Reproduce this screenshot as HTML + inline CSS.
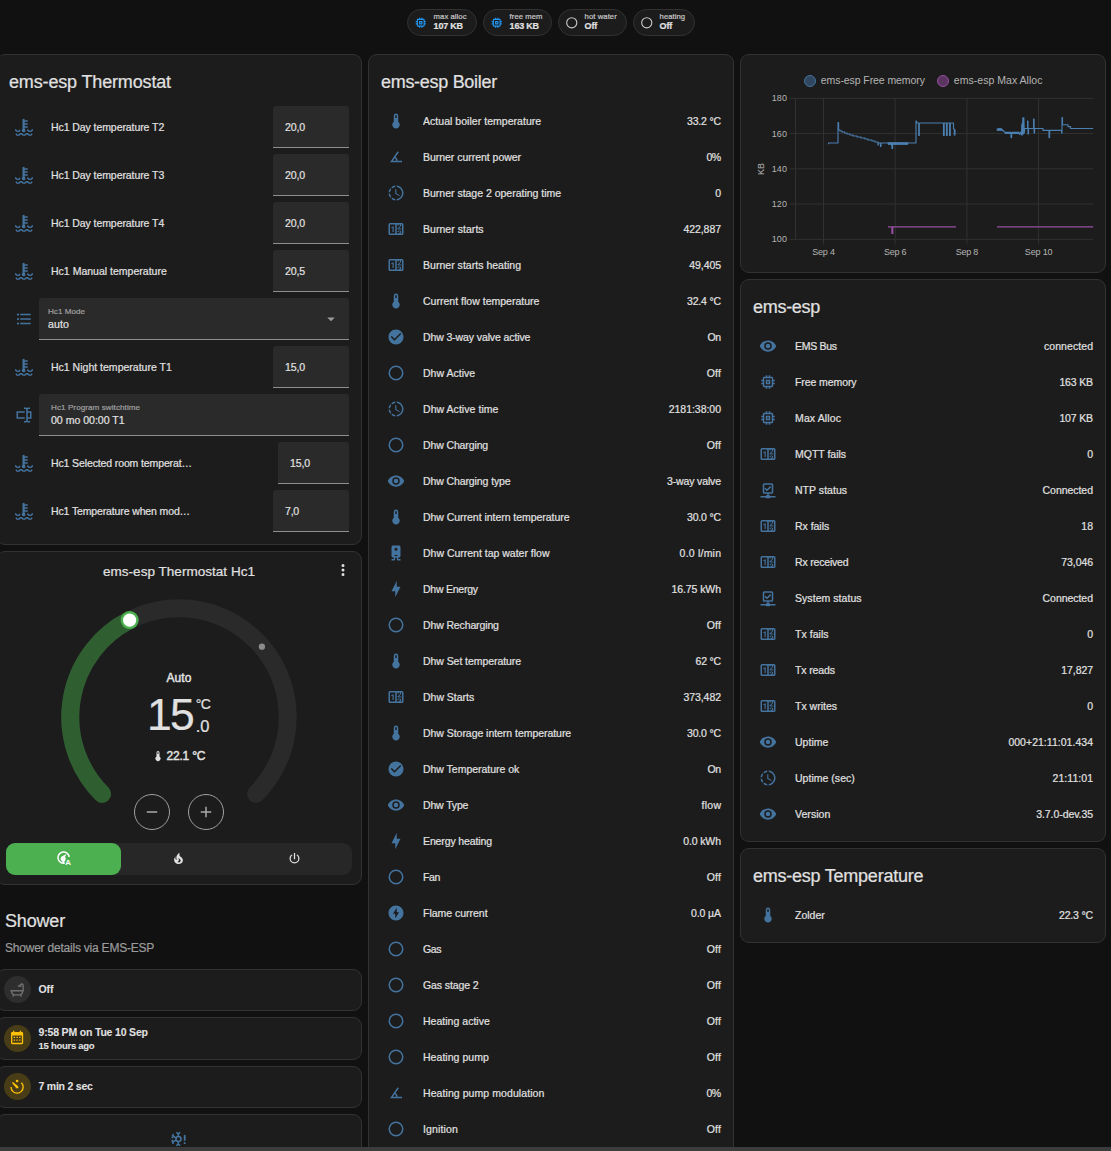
<!DOCTYPE html><html><head><meta charset="utf-8"><title>ems-esp</title><style>
*{box-sizing:border-box}
html,body{margin:0;padding:0;background:#111;overflow:hidden}
body{width:1111px;height:1151px;position:relative;font-family:"Liberation Sans", sans-serif;color:#e1e1e1;font-size:10.5px;line-height:1.2;-webkit-text-stroke:0.2px}
svg{display:block;fill:#44739e}
.t{white-space:nowrap}
.col{position:absolute;top:54px;width:366px}
.card{background:#1c1c1c;border:1px solid #323232;border-radius:9px;margin-bottom:6px;position:relative}
.hdr{font-size:18px;line-height:36px;height:57px;padding:9px 12px 12px;color:#e1e1e1;display:block}
.states{padding:0 12px 12px;margin-top:-6px}
.row{display:flex;align-items:center;height:30px;margin:6px 0}
.row.tall{height:42px}
.states>.row:first-child{margin-top:0}.states>.row:last-child{margin-bottom:0}
.badge{width:30px;height:30px;display:flex;align-items:center;justify-content:center;flex:none}
.info{margin-left:12px;flex:1 1 0;min-width:0;overflow:hidden;text-overflow:ellipsis;padding-right:6px}
.val{text-align:right;flex:none}
.tf{height:42px;background:#2a2a2a;border-radius:3px 3px 0 0;border-bottom:1px solid #8e8e8e;flex:none;padding:1px 12px 0;display:flex;align-items:center;font-size:10.6px;position:relative}
.tf.wide{flex:1;margin-left:0;display:block;padding:0}
.tf .lbl{position:absolute;left:9px;top:9px;font-size:8.1px;color:#a0a0a0}
.tf .v{position:absolute;left:9px;top:20px;font-size:10.6px}
.tf.p12 .lbl,.tf.p12 .v{left:12px}
/* chips */
.chip{position:absolute;top:9px;height:27px;border:1px solid #323232;border-radius:13.5px;background:#1c1c1c;}
.chip svg{position:absolute;left:6px;top:5.8px}
.chip .a{position:absolute;left:25.6px;top:1.8px;font-size:7.7px;color:#c8c8c8;line-height:9px}
.chip .b{position:absolute;left:25.6px;top:11.1px;font-size:9px;font-weight:700;line-height:10px}

.m5{-webkit-text-stroke:0.45px currentColor}
.thtitle{position:absolute;left:0;right:0;top:9.5px;text-align:center;font-size:13.5px;line-height:20px}
.thmode{position:absolute;left:0;right:0;top:118px;text-align:center;font-size:12px;line-height:16px}
.thbig{position:absolute;left:150px;top:137.8px;font-size:44.5px;line-height:50px}
.thunit{position:absolute;left:198.8px;top:144px;font-size:14px;line-height:16px}
.thdec{position:absolute;left:198.8px;top:164px;font-size:16.5px;line-height:20px}
.thcur{position:absolute;left:169.5px;top:195.5px;font-size:12px;line-height:16px}
.thbtn{position:absolute;width:36px;height:36px;border:1px solid #a0a0a0;border-radius:50%;display:flex;align-items:center;justify-content:center}
.thbtn svg{fill:#a8a8a8}
.thsel{position:absolute;width:346px;height:32px;border-radius:9px;background:#272727;display:flex}
.thsel div{flex:1;display:flex;align-items:center;justify-content:center;border-radius:9px;padding-bottom:2px}
.thsel div.on{background:#4caf50}
.thsel svg{fill:#e1e1e1}
.shtitle{position:absolute;left:9px;top:855.5px;font-size:18px;line-height:22px}
.shsub{position:absolute;left:9px;top:885.5px;font-size:12px;line-height:16px;color:#9b9b9b}
.mc{position:absolute;left:0;width:366px;height:42px;margin:0}
.shape{position:absolute;left:7px;top:6px;width:27px;height:27px;border-radius:50%;display:flex;align-items:center;justify-content:center}
.shape svg{position:absolute;left:4.7px;top:5.4px}
.mp,.ms{-webkit-text-stroke:0.08px}
.mp{position:absolute;left:41.5px;top:12px;font-size:10.5px;font-weight:700;line-height:14px}
.mp.two{top:6.8px}
.ms{position:absolute;left:41.5px;top:22.2px;font-size:9.5px;font-weight:700;line-height:12px}
.bul{position:absolute;width:12px;height:12px;border-radius:50%;border:1px solid}
.leg,.yl,.xl,.kb{-webkit-text-stroke:0}
.leg{position:absolute;top:18.3px;font-size:10.5px;line-height:14px;color:#b4b4b4}
.yl{position:absolute;right:318px;font-size:9px;line-height:12px;color:#b4b4b4;text-align:right}
.xl{position:absolute;width:60px;top:190.5px;font-size:9px;line-height:12px;color:#b4b4b4;text-align:center}
.kb{position:absolute;left:6.5px;top:107.5px;width:26px;text-align:center;font-size:9px;line-height:12px;color:#b4b4b4;transform:rotate(-90deg)}
</style></head><body>
<div class="chip" style="left:407px;width:70px"><svg style="fill:#2196f3" viewBox="0 0 24 24" width="13.5" height="13.5"><path d="M17,17H7V7H17M21,11V9H19V7C19,5.89 18.1,5 17,5H15V3H13V5H11V3H9V5H7C5.89,5 5,5.89 5,7V9H3V11H5V13H3V15H5V17A2,2 0 0,0 7,19H9V21H11V19H13V21H15V19H17A2,2 0 0,0 19,17V15H21V13H19V11M13,13H11V11H13M15,9H9V15H15V9Z"/></svg><div class="t a" style="letter-spacing:0.056px">max alloc</div><div class="t b" style="letter-spacing:-0.219px">107 KB</div></div>
<div class="chip" style="left:483px;width:69px"><svg style="fill:#2196f3" viewBox="0 0 24 24" width="13.5" height="13.5"><path d="M17,17H7V7H17M21,11V9H19V7C19,5.89 18.1,5 17,5H15V3H13V5H11V3H9V5H7C5.89,5 5,5.89 5,7V9H3V11H5V13H3V15H5V17A2,2 0 0,0 7,19H9V21H11V19H13V21H15V19H17A2,2 0 0,0 19,17V15H21V13H19V11M13,13H11V11H13M15,9H9V15H15V9Z"/></svg><div class="t a" style="letter-spacing:0.045px">free mem</div><div class="t b" style="letter-spacing:-0.219px">163 KB</div></div>
<div class="chip" style="left:558px;width:69px"><svg style="fill:#c8c8c8" viewBox="0 0 24 24" width="13.5" height="13.5"><path d="M12,20A8,8 0 0,1 4,12A8,8 0 0,1 12,4A8,8 0 0,1 20,12A8,8 0 0,1 12,20M12,2A10,10 0 0,0 2,12A10,10 0 0,0 12,22A10,10 0 0,0 22,12A10,10 0 0,0 12,2Z"/></svg><div class="t a" style="letter-spacing:0.064px">hot water</div><div class="t b" style="letter-spacing:-0.115px">Off</div></div>
<div class="chip" style="left:633px;width:62px"><svg style="fill:#c8c8c8" viewBox="0 0 24 24" width="13.5" height="13.5"><path d="M12,20A8,8 0 0,1 4,12A8,8 0 0,1 12,4A8,8 0 0,1 20,12A8,8 0 0,1 12,20M12,2A10,10 0 0,0 2,12A10,10 0 0,0 12,22A10,10 0 0,0 22,12A10,10 0 0,0 12,2Z"/></svg><div class="t a" style="letter-spacing:0.031px">heating</div><div class="t b" style="letter-spacing:-0.115px">Off</div></div>
<div class="col" style="left:-4px">
<div class="card"><div class="t hdr" style="letter-spacing:-0.153px">ems-esp Thermostat</div><div class="states">
<div class="row tall"><div class="badge"><svg viewBox="0 0 24 24" width="18" height="18"><path d="M11.5,1A1.5,1.5 0 0,0 10,2.5V14.5C9.37,14.97 9,15.71 9,16.5A2.5,2.5 0 0,0 11.5,19A2.5,2.5 0 0,0 14,16.5C14,15.71 13.63,15 13,14.5V13H17V11H13V9H17V7H13V5H17V3H13V2.5A1.5,1.5 0 0,0 11.5,1M0,15V17C0.67,17 0.79,17.21 1.29,17.71C1.79,18.21 2.67,19 4,19C5.33,19 6.21,18.21 6.71,17.71C6.82,17.59 6.91,17.5 7,17.41V15.16C6.21,15.42 5.65,15.93 5.29,16.29C4.79,16.79 4.67,17 4,17C3.33,17 3.21,16.79 2.71,16.29C2.21,15.79 1.33,15 0,15M16,15V17C16.67,17 16.79,17.21 17.29,17.71C17.79,18.21 18.67,19 20,19C21.33,19 22.21,18.21 22.71,17.71C23.21,17.21 23.33,17 24,17V15C22.67,15 21.79,15.79 21.29,16.29C20.79,16.79 20.67,17 20,17C19.33,17 19.21,16.79 18.71,16.29C18.21,15.79 17.33,15 16,15M8,20C6.67,20 5.79,20.79 5.29,21.29C4.79,21.79 4.67,22 4,22C3.33,22 3.21,21.79 2.71,21.29C2.35,20.93 1.79,20.42 1,20.16V22.41C1.09,22.5 1.18,22.59 1.29,22.71C1.79,23.21 2.67,24 4,24C5.33,24 6.21,23.21 6.71,22.71C7.21,22.21 7.33,22 8,22C8.67,22 8.79,22.21 9.29,22.71C9.79,23.21 10.67,24 12,24C13.33,24 14.21,23.21 14.71,22.71C15.21,22.21 15.33,22 16,22C16.67,22 16.79,22.21 17.29,22.71C17.79,23.21 18.67,24 20,24C21.33,24 22.21,23.21 22.71,22.71C22.82,22.59 22.91,22.5 23,22.41V20.16C22.21,20.42 21.65,20.93 21.29,21.29C20.79,21.79 20.67,22 20,22C19.33,22 19.21,21.79 18.71,21.29C18.21,20.79 17.33,20 16,20C14.67,20 13.79,20.79 13.29,21.29C12.79,21.79 12.67,22 12,22C11.33,22 11.21,21.79 10.71,21.29C10.21,20.79 9.33,20 8,20Z"/></svg></div><div class="t info" style="letter-spacing:-0.074px">Hc1 Day temperature T2</div><div class="tf" style="width:76px"><span class="t tfv" style="letter-spacing:-0.168px">20,0</span></div></div>
<div class="row tall"><div class="badge"><svg viewBox="0 0 24 24" width="18" height="18"><path d="M11.5,1A1.5,1.5 0 0,0 10,2.5V14.5C9.37,14.97 9,15.71 9,16.5A2.5,2.5 0 0,0 11.5,19A2.5,2.5 0 0,0 14,16.5C14,15.71 13.63,15 13,14.5V13H17V11H13V9H17V7H13V5H17V3H13V2.5A1.5,1.5 0 0,0 11.5,1M0,15V17C0.67,17 0.79,17.21 1.29,17.71C1.79,18.21 2.67,19 4,19C5.33,19 6.21,18.21 6.71,17.71C6.82,17.59 6.91,17.5 7,17.41V15.16C6.21,15.42 5.65,15.93 5.29,16.29C4.79,16.79 4.67,17 4,17C3.33,17 3.21,16.79 2.71,16.29C2.21,15.79 1.33,15 0,15M16,15V17C16.67,17 16.79,17.21 17.29,17.71C17.79,18.21 18.67,19 20,19C21.33,19 22.21,18.21 22.71,17.71C23.21,17.21 23.33,17 24,17V15C22.67,15 21.79,15.79 21.29,16.29C20.79,16.79 20.67,17 20,17C19.33,17 19.21,16.79 18.71,16.29C18.21,15.79 17.33,15 16,15M8,20C6.67,20 5.79,20.79 5.29,21.29C4.79,21.79 4.67,22 4,22C3.33,22 3.21,21.79 2.71,21.29C2.35,20.93 1.79,20.42 1,20.16V22.41C1.09,22.5 1.18,22.59 1.29,22.71C1.79,23.21 2.67,24 4,24C5.33,24 6.21,23.21 6.71,22.71C7.21,22.21 7.33,22 8,22C8.67,22 8.79,22.21 9.29,22.71C9.79,23.21 10.67,24 12,24C13.33,24 14.21,23.21 14.71,22.71C15.21,22.21 15.33,22 16,22C16.67,22 16.79,22.21 17.29,22.71C17.79,23.21 18.67,24 20,24C21.33,24 22.21,23.21 22.71,22.71C22.82,22.59 22.91,22.5 23,22.41V20.16C22.21,20.42 21.65,20.93 21.29,21.29C20.79,21.79 20.67,22 20,22C19.33,22 19.21,21.79 18.71,21.29C18.21,20.79 17.33,20 16,20C14.67,20 13.79,20.79 13.29,21.29C12.79,21.79 12.67,22 12,22C11.33,22 11.21,21.79 10.71,21.29C10.21,20.79 9.33,20 8,20Z"/></svg></div><div class="t info" style="letter-spacing:-0.074px">Hc1 Day temperature T3</div><div class="tf" style="width:76px"><span class="t tfv" style="letter-spacing:-0.168px">20,0</span></div></div>
<div class="row tall"><div class="badge"><svg viewBox="0 0 24 24" width="18" height="18"><path d="M11.5,1A1.5,1.5 0 0,0 10,2.5V14.5C9.37,14.97 9,15.71 9,16.5A2.5,2.5 0 0,0 11.5,19A2.5,2.5 0 0,0 14,16.5C14,15.71 13.63,15 13,14.5V13H17V11H13V9H17V7H13V5H17V3H13V2.5A1.5,1.5 0 0,0 11.5,1M0,15V17C0.67,17 0.79,17.21 1.29,17.71C1.79,18.21 2.67,19 4,19C5.33,19 6.21,18.21 6.71,17.71C6.82,17.59 6.91,17.5 7,17.41V15.16C6.21,15.42 5.65,15.93 5.29,16.29C4.79,16.79 4.67,17 4,17C3.33,17 3.21,16.79 2.71,16.29C2.21,15.79 1.33,15 0,15M16,15V17C16.67,17 16.79,17.21 17.29,17.71C17.79,18.21 18.67,19 20,19C21.33,19 22.21,18.21 22.71,17.71C23.21,17.21 23.33,17 24,17V15C22.67,15 21.79,15.79 21.29,16.29C20.79,16.79 20.67,17 20,17C19.33,17 19.21,16.79 18.71,16.29C18.21,15.79 17.33,15 16,15M8,20C6.67,20 5.79,20.79 5.29,21.29C4.79,21.79 4.67,22 4,22C3.33,22 3.21,21.79 2.71,21.29C2.35,20.93 1.79,20.42 1,20.16V22.41C1.09,22.5 1.18,22.59 1.29,22.71C1.79,23.21 2.67,24 4,24C5.33,24 6.21,23.21 6.71,22.71C7.21,22.21 7.33,22 8,22C8.67,22 8.79,22.21 9.29,22.71C9.79,23.21 10.67,24 12,24C13.33,24 14.21,23.21 14.71,22.71C15.21,22.21 15.33,22 16,22C16.67,22 16.79,22.21 17.29,22.71C17.79,23.21 18.67,24 20,24C21.33,24 22.21,23.21 22.71,22.71C22.82,22.59 22.91,22.5 23,22.41V20.16C22.21,20.42 21.65,20.93 21.29,21.29C20.79,21.79 20.67,22 20,22C19.33,22 19.21,21.79 18.71,21.29C18.21,20.79 17.33,20 16,20C14.67,20 13.79,20.79 13.29,21.29C12.79,21.79 12.67,22 12,22C11.33,22 11.21,21.79 10.71,21.29C10.21,20.79 9.33,20 8,20Z"/></svg></div><div class="t info" style="letter-spacing:-0.074px">Hc1 Day temperature T4</div><div class="tf" style="width:76px"><span class="t tfv" style="letter-spacing:-0.168px">20,0</span></div></div>
<div class="row tall"><div class="badge"><svg viewBox="0 0 24 24" width="18" height="18"><path d="M11.5,1A1.5,1.5 0 0,0 10,2.5V14.5C9.37,14.97 9,15.71 9,16.5A2.5,2.5 0 0,0 11.5,19A2.5,2.5 0 0,0 14,16.5C14,15.71 13.63,15 13,14.5V13H17V11H13V9H17V7H13V5H17V3H13V2.5A1.5,1.5 0 0,0 11.5,1M0,15V17C0.67,17 0.79,17.21 1.29,17.71C1.79,18.21 2.67,19 4,19C5.33,19 6.21,18.21 6.71,17.71C6.82,17.59 6.91,17.5 7,17.41V15.16C6.21,15.42 5.65,15.93 5.29,16.29C4.79,16.79 4.67,17 4,17C3.33,17 3.21,16.79 2.71,16.29C2.21,15.79 1.33,15 0,15M16,15V17C16.67,17 16.79,17.21 17.29,17.71C17.79,18.21 18.67,19 20,19C21.33,19 22.21,18.21 22.71,17.71C23.21,17.21 23.33,17 24,17V15C22.67,15 21.79,15.79 21.29,16.29C20.79,16.79 20.67,17 20,17C19.33,17 19.21,16.79 18.71,16.29C18.21,15.79 17.33,15 16,15M8,20C6.67,20 5.79,20.79 5.29,21.29C4.79,21.79 4.67,22 4,22C3.33,22 3.21,21.79 2.71,21.29C2.35,20.93 1.79,20.42 1,20.16V22.41C1.09,22.5 1.18,22.59 1.29,22.71C1.79,23.21 2.67,24 4,24C5.33,24 6.21,23.21 6.71,22.71C7.21,22.21 7.33,22 8,22C8.67,22 8.79,22.21 9.29,22.71C9.79,23.21 10.67,24 12,24C13.33,24 14.21,23.21 14.71,22.71C15.21,22.21 15.33,22 16,22C16.67,22 16.79,22.21 17.29,22.71C17.79,23.21 18.67,24 20,24C21.33,24 22.21,23.21 22.71,22.71C22.82,22.59 22.91,22.5 23,22.41V20.16C22.21,20.42 21.65,20.93 21.29,21.29C20.79,21.79 20.67,22 20,22C19.33,22 19.21,21.79 18.71,21.29C18.21,20.79 17.33,20 16,20C14.67,20 13.79,20.79 13.29,21.29C12.79,21.79 12.67,22 12,22C11.33,22 11.21,21.79 10.71,21.29C10.21,20.79 9.33,20 8,20Z"/></svg></div><div class="t info" style="letter-spacing:0.012px">Hc1 Manual temperature</div><div class="tf" style="width:76px"><span class="t tfv" style="letter-spacing:-0.168px">20,5</span></div></div>
<div class="row tall"><div class="badge"><svg viewBox="0 0 24 24" width="18" height="18"><path d="M7,5H21V7H7V5M7,13V11H21V13H7M4,4.5A1.5,1.5 0 0,1 5.5,6A1.5,1.5 0 0,1 4,7.5A1.5,1.5 0 0,1 2.5,6A1.5,1.5 0 0,1 4,4.5M4,10.5A1.5,1.5 0 0,1 5.5,12A1.5,1.5 0 0,1 4,13.5A1.5,1.5 0 0,1 2.5,12A1.5,1.5 0 0,1 4,10.5M7,19V17H21V19H7M4,16.5A1.5,1.5 0 0,1 5.5,18A1.5,1.5 0 0,1 4,19.5A1.5,1.5 0 0,1 2.5,18A1.5,1.5 0 0,1 4,16.5Z"/></svg></div><div class="tf wide"><div class="t lbl" style="letter-spacing:0.027px">Hc1 Mode</div><div class="t v" style="letter-spacing:0.098px">auto</div><svg style="position:absolute;right:9px;top:12px;fill:#9b9b9b" viewBox="0 0 24 24" width="18" height="18"><path d="M7,10L12,15L17,10H7Z"/></svg></div></div>
<div class="row tall"><div class="badge"><svg viewBox="0 0 24 24" width="18" height="18"><path d="M11.5,1A1.5,1.5 0 0,0 10,2.5V14.5C9.37,14.97 9,15.71 9,16.5A2.5,2.5 0 0,0 11.5,19A2.5,2.5 0 0,0 14,16.5C14,15.71 13.63,15 13,14.5V13H17V11H13V9H17V7H13V5H17V3H13V2.5A1.5,1.5 0 0,0 11.5,1M0,15V17C0.67,17 0.79,17.21 1.29,17.71C1.79,18.21 2.67,19 4,19C5.33,19 6.21,18.21 6.71,17.71C6.82,17.59 6.91,17.5 7,17.41V15.16C6.21,15.42 5.65,15.93 5.29,16.29C4.79,16.79 4.67,17 4,17C3.33,17 3.21,16.79 2.71,16.29C2.21,15.79 1.33,15 0,15M16,15V17C16.67,17 16.79,17.21 17.29,17.71C17.79,18.21 18.67,19 20,19C21.33,19 22.21,18.21 22.71,17.71C23.21,17.21 23.33,17 24,17V15C22.67,15 21.79,15.79 21.29,16.29C20.79,16.79 20.67,17 20,17C19.33,17 19.21,16.79 18.71,16.29C18.21,15.79 17.33,15 16,15M8,20C6.67,20 5.79,20.79 5.29,21.29C4.79,21.79 4.67,22 4,22C3.33,22 3.21,21.79 2.71,21.29C2.35,20.93 1.79,20.42 1,20.16V22.41C1.09,22.5 1.18,22.59 1.29,22.71C1.79,23.21 2.67,24 4,24C5.33,24 6.21,23.21 6.71,22.71C7.21,22.21 7.33,22 8,22C8.67,22 8.79,22.21 9.29,22.71C9.79,23.21 10.67,24 12,24C13.33,24 14.21,23.21 14.71,22.71C15.21,22.21 15.33,22 16,22C16.67,22 16.79,22.21 17.29,22.71C17.79,23.21 18.67,24 20,24C21.33,24 22.21,23.21 22.71,22.71C22.82,22.59 22.91,22.5 23,22.41V20.16C22.21,20.42 21.65,20.93 21.29,21.29C20.79,21.79 20.67,22 20,22C19.33,22 19.21,21.79 18.71,21.29C18.21,20.79 17.33,20 16,20C14.67,20 13.79,20.79 13.29,21.29C12.79,21.79 12.67,22 12,22C11.33,22 11.21,21.79 10.71,21.29C10.21,20.79 9.33,20 8,20Z"/></svg></div><div class="t info" style="letter-spacing:0.008px">Hc1 Night temperature T1</div><div class="tf" style="width:76px"><span class="t tfv" style="letter-spacing:-0.168px">15,0</span></div></div>
<div class="row tall"><div class="badge"><svg viewBox="0 0 24 24" width="18" height="18"><path d="M17,7H22V17H17V19A1,1 0 0,0 18,20H20V22H17.5C16.95,22 16,21.55 16,21C16,21.55 15.05,22 14.5,22H12V20H14A1,1 0 0,0 15,19V5A1,1 0 0,0 14,4H12V2H14.5C15.05,2 16,2.45 16,3C16,2.45 16.95,2 17.5,2H20V4H18A1,1 0 0,0 17,5V7M2,7H13V9H4V15H13V17H2V7M20,15V9H17V15H20Z"/></svg></div><div class="tf wide p12"><div class="t lbl" style="letter-spacing:0.066px">Hc1 Program switchtime</div><div class="t v" style="letter-spacing:-0.031px">00 mo 00:00 T1</div></div></div>
<div class="row tall"><div class="badge"><svg viewBox="0 0 24 24" width="18" height="18"><path d="M11.5,1A1.5,1.5 0 0,0 10,2.5V14.5C9.37,14.97 9,15.71 9,16.5A2.5,2.5 0 0,0 11.5,19A2.5,2.5 0 0,0 14,16.5C14,15.71 13.63,15 13,14.5V13H17V11H13V9H17V7H13V5H17V3H13V2.5A1.5,1.5 0 0,0 11.5,1M0,15V17C0.67,17 0.79,17.21 1.29,17.71C1.79,18.21 2.67,19 4,19C5.33,19 6.21,18.21 6.71,17.71C6.82,17.59 6.91,17.5 7,17.41V15.16C6.21,15.42 5.65,15.93 5.29,16.29C4.79,16.79 4.67,17 4,17C3.33,17 3.21,16.79 2.71,16.29C2.21,15.79 1.33,15 0,15M16,15V17C16.67,17 16.79,17.21 17.29,17.71C17.79,18.21 18.67,19 20,19C21.33,19 22.21,18.21 22.71,17.71C23.21,17.21 23.33,17 24,17V15C22.67,15 21.79,15.79 21.29,16.29C20.79,16.79 20.67,17 20,17C19.33,17 19.21,16.79 18.71,16.29C18.21,15.79 17.33,15 16,15M8,20C6.67,20 5.79,20.79 5.29,21.29C4.79,21.79 4.67,22 4,22C3.33,22 3.21,21.79 2.71,21.29C2.35,20.93 1.79,20.42 1,20.16V22.41C1.09,22.5 1.18,22.59 1.29,22.71C1.79,23.21 2.67,24 4,24C5.33,24 6.21,23.21 6.71,22.71C7.21,22.21 7.33,22 8,22C8.67,22 8.79,22.21 9.29,22.71C9.79,23.21 10.67,24 12,24C13.33,24 14.21,23.21 14.71,22.71C15.21,22.21 15.33,22 16,22C16.67,22 16.79,22.21 17.29,22.71C17.79,23.21 18.67,24 20,24C21.33,24 22.21,23.21 22.71,22.71C22.82,22.59 22.91,22.5 23,22.41V20.16C22.21,20.42 21.65,20.93 21.29,21.29C20.79,21.79 20.67,22 20,22C19.33,22 19.21,21.79 18.71,21.29C18.21,20.79 17.33,20 16,20C14.67,20 13.79,20.79 13.29,21.29C12.79,21.79 12.67,22 12,22C11.33,22 11.21,21.79 10.71,21.29C10.21,20.79 9.33,20 8,20Z"/></svg></div><div class="t info" style="letter-spacing:-0.121px">Hc1 Selected room temperat…</div><div class="tf" style="width:71px"><span class="t tfv" style="letter-spacing:-0.168px">15,0</span></div></div>
<div class="row tall"><div class="badge"><svg viewBox="0 0 24 24" width="18" height="18"><path d="M11.5,1A1.5,1.5 0 0,0 10,2.5V14.5C9.37,14.97 9,15.71 9,16.5A2.5,2.5 0 0,0 11.5,19A2.5,2.5 0 0,0 14,16.5C14,15.71 13.63,15 13,14.5V13H17V11H13V9H17V7H13V5H17V3H13V2.5A1.5,1.5 0 0,0 11.5,1M0,15V17C0.67,17 0.79,17.21 1.29,17.71C1.79,18.21 2.67,19 4,19C5.33,19 6.21,18.21 6.71,17.71C6.82,17.59 6.91,17.5 7,17.41V15.16C6.21,15.42 5.65,15.93 5.29,16.29C4.79,16.79 4.67,17 4,17C3.33,17 3.21,16.79 2.71,16.29C2.21,15.79 1.33,15 0,15M16,15V17C16.67,17 16.79,17.21 17.29,17.71C17.79,18.21 18.67,19 20,19C21.33,19 22.21,18.21 22.71,17.71C23.21,17.21 23.33,17 24,17V15C22.67,15 21.79,15.79 21.29,16.29C20.79,16.79 20.67,17 20,17C19.33,17 19.21,16.79 18.71,16.29C18.21,15.79 17.33,15 16,15M8,20C6.67,20 5.79,20.79 5.29,21.29C4.79,21.79 4.67,22 4,22C3.33,22 3.21,21.79 2.71,21.29C2.35,20.93 1.79,20.42 1,20.16V22.41C1.09,22.5 1.18,22.59 1.29,22.71C1.79,23.21 2.67,24 4,24C5.33,24 6.21,23.21 6.71,22.71C7.21,22.21 7.33,22 8,22C8.67,22 8.79,22.21 9.29,22.71C9.79,23.21 10.67,24 12,24C13.33,24 14.21,23.21 14.71,22.71C15.21,22.21 15.33,22 16,22C16.67,22 16.79,22.21 17.29,22.71C17.79,23.21 18.67,24 20,24C21.33,24 22.21,23.21 22.71,22.71C22.82,22.59 22.91,22.5 23,22.41V20.16C22.21,20.42 21.65,20.93 21.29,21.29C20.79,21.79 20.67,22 20,22C19.33,22 19.21,21.79 18.71,21.29C18.21,20.79 17.33,20 16,20C14.67,20 13.79,20.79 13.29,21.29C12.79,21.79 12.67,22 12,22C11.33,22 11.21,21.79 10.71,21.29C10.21,20.79 9.33,20 8,20Z"/></svg></div><div class="t info" style="letter-spacing:-0.129px">Hc1 Temperature when mod…</div><div class="tf" style="width:76px"><span class="t tfv" style="letter-spacing:-0.245px">7,0</span></div></div>
</div></div>
<div class="card" style="height:334px;margin-bottom:0">
<div class="t thtitle" style="letter-spacing:0.033px">ems-esp Thermostat Hc1</div>
<svg style="position:absolute;left:337px;top:9px;fill:#e1e1e1" viewBox="0 0 24 24" width="18" height="18"><path d="M12,16A2,2 0 0,1 14,18A2,2 0 0,1 12,20A2,2 0 0,1 10,18A2,2 0 0,1 12,16M12,10A2,2 0 0,1 14,12A2,2 0 0,1 12,14A2,2 0 0,1 10,12A2,2 0 0,1 12,10M12,4A2,2 0 0,1 14,6A2,2 0 0,1 12,8A2,2 0 0,1 10,6A2,2 0 0,1 12,4Z"/></svg>
<svg style="position:absolute;left:62px;top:44.75px;fill:none" width="240" height="240" viewBox="-160 -160 320 320"><path d="M-102.53 102.53A145 145 0 1 1 102.53 102.53" stroke="#2a2a2a" stroke-width="24" stroke-linecap="round"/><path d="M-102.53 102.53A145 145 0 0 1 -65.83 -129.20" stroke="#2f5f31" stroke-width="24" stroke-linecap="round"/><circle cx="110.55" cy="-93.82" r="4.2" fill="#8c8c8c"/><circle cx="-65.83" cy="-129.20" r="12" fill="#4caf50"/><circle cx="-65.83" cy="-129.20" r="8.8" fill="#fff"/></svg>
<div class="t thmode m5" style="letter-spacing:0.086px">Auto</div>
<div class="t thbig" style="letter-spacing:-1.734px">15</div>
<div class="t thunit" style="letter-spacing:-0.688px">°C</div>
<div class="t thdec" style="letter-spacing:-0.070px">.0</div>
<svg style="position:absolute;left:155px;top:197.5px;fill:#e1e1e1" viewBox="0 0 24 24" width="12" height="12"><path d="M15 13V5A3 3 0 0 0 9 5V13A5 5 0 1 0 15 13M12 4A1 1 0 0 1 13 5V8H11V5A1 1 0 0 1 12 4Z"/></svg>
<div class="t thcur m5" style="letter-spacing:-0.212px">22.1 °C</div>
<div class="thbtn" style="left:137px;top:242px"><svg viewBox="0 0 24 24" width="18" height="18"><path d="M19,13H5V11H19V13Z"/></svg></div>
<div class="thbtn" style="left:191px;top:242px"><svg viewBox="0 0 24 24" width="18" height="18"><path d="M19,13H13V19H11V13H5V11H11V5H13V11H19V13Z"/></svg></div>
<div class="thsel" style="left:9px;top:291px"><div class="on"><svg viewBox="0 0 24 24" width="18" height="18" style="fill:#fff"><path d="M13.2 19.9A8.6 8.6 0 1 1 20 10.2L17.9 10.6A6.5 6.5 0 1 0 12.6 17.9Z"/><path d="M15.2 6.6L13.4 10.6A3.7 3.7 0 0 1 12.6 16.2L12.6 18.6L9.6 18.4L9.6 16.4A3.7 3.7 0 0 1 10.2 9.4Z"/><text x="13.6" y="21.4" font-size="10.5" font-weight="700" font-family="Liberation Sans, sans-serif">A</text></svg></div><div><svg viewBox="0 0 24 24" width="15" height="15"><path d="M17.66 11.2C17.43 10.9 17.15 10.64 16.89 10.38C16.22 9.78 15.46 9.35 14.82 8.72C13.33 7.26 13 4.85 13.95 3C13 3.23 12.17 3.75 11.46 4.32C8.87 6.4 7.85 10.07 9.07 13.22C9.11 13.32 9.15 13.42 9.15 13.55C9.15 13.77 9 13.97 8.8 14.05C8.57 14.15 8.33 14.09 8.14 13.93C8.08 13.88 8.04 13.83 8 13.76C6.87 12.33 6.69 10.28 7.45 8.64C5.78 10 4.87 12.3 5 14.47C5.06 14.97 5.12 15.47 5.29 15.97C5.43 16.57 5.7 17.17 6 17.7C7.08 19.43 8.95 20.67 10.96 20.92C13.1 21.19 15.39 20.8 17.03 19.32C18.86 17.66 19.5 15 18.56 12.72L18.43 12.46C18.22 12 17.66 11.2 17.66 11.2M14.5 17.5C14.22 17.74 13.76 18 13.4 18.1C12.28 18.5 11.16 17.94 10.5 17.28C11.69 17 12.4 16.12 12.61 15.23C12.78 14.43 12.46 13.77 12.33 13C12.21 12.26 12.23 11.63 12.5 10.94C12.69 11.32 12.89 11.7 13.13 12C13.9 13 15.11 13.44 15.37 14.8C15.41 14.94 15.43 15.08 15.43 15.23C15.46 16.05 15.1 16.95 14.5 17.5H14.5Z"/></svg></div><div><svg viewBox="0 0 24 24" width="15" height="15"><path d="M16.56,5.44L15.11,6.89C16.84,7.94 18,9.83 18,12A6,6 0 0,1 12,18A6,6 0 0,1 6,12C6,9.83 7.16,7.94 8.88,6.88L7.44,5.44C5.36,6.88 4,9.28 4,12A8,8 0 0,0 12,20A8,8 0 0,0 20,12C20,9.28 18.64,6.88 16.56,5.44M13,3H11V13H13"/></svg></div></div>
</div>
<div class="t shtitle" style="letter-spacing:-0.164px">Shower</div>
<div class="t shsub" style="letter-spacing:-0.217px">Shower details via EMS-ESP</div>
<div class="card mc" style="top:915px;height:42px"><div class="shape" style="background:#2e2e2e"><svg style="fill:#707070;top:6.3px" viewBox="0 0 24 24" width="16.2" height="16.2"><path d="M21 14V15C21 16.91 19.93 18.57 18.35 19.41L19 22H17L16.5 20C16.33 20 16.17 20 16 20H8C7.83 20 7.67 20 7.5 20L7 22H5L5.65 19.41C4.07 18.57 3 16.91 3 15V14H2V12H20V5C20 4.45 19.55 4 19 4C18.5 4 18.12 4.34 18 4.79C18.63 5.33 19 6.13 19 7H13C13 5.34 14.34 4 16 4C16.06 4 16.12 4 16.18 4C16.59 2.84 17.7 2 19 2C20.66 2 22 3.34 22 5V14H21M19 14H5V15C5 16.66 6.34 18 8 18H16C17.66 18 19 16.66 19 15V14Z"/></svg></div><div class="t mp" style="letter-spacing:-0.135px">Off</div></div>
<div class="card mc" style="top:963px;height:43px"><div class="shape" style="background:#493d18;top:7px"><svg style="fill:#ffc107" viewBox="0 0 24 24" width="16.2" height="16.2"><path d="M9,10V12H7V10H9M13,10V12H11V10H13M17,10V12H15V10H17M19,3A2,2 0 0,1 21,5V19A2,2 0 0,1 19,21H5C3.89,21 3,20.1 3,19V5A2,2 0 0,1 5,3H6V1H8V3H16V1H18V3H19M19,19V8H5V19H19M9,14V16H7V14H9M13,14V16H11V14H13M17,14V16H15V14H17Z"/></svg></div><div class="t mp two" style="letter-spacing:-0.175px">9:58 PM on Tue 10 Sep</div><div class="t ms" style="letter-spacing:-0.272px">15 hours ago</div></div>
<div class="card mc" style="top:1012px;height:42px"><div class="shape" style="background:#493d18"><svg style="fill:#ffc107;top:6.3px" viewBox="0 0 24 24" width="16.2" height="16.2"><path d="M4.94,6.35C4.55,5.96 4.55,5.32 4.94,4.93C5.33,4.54 5.96,4.54 6.35,4.93L13.07,10.31L13.42,10.59C14.2,11.37 14.2,12.64 13.42,13.42C12.64,14.2 11.37,14.2 10.59,13.42L10.31,13.07L4.94,6.35M12,20A8,8 0 0,0 20,12C20,9.79 19.1,7.79 17.66,6.34L19.07,4.93C20.88,6.74 22,9.24 22,12A10,10 0 0,1 12,22A10,10 0 0,1 2,12H4A8,8 0 0,0 12,20M12,1A2,2 0 0,1 14,3A2,2 0 0,1 12,5A2,2 0 0,1 10,3A2,2 0 0,1 12,1Z"/></svg></div><div class="t mp" style="top:11.9px;letter-spacing:-0.223px">7 min 2 sec</div></div>
<div class="card mc" style="top:1060px;height:80px"><div style="position:absolute;left:173px;top:15px"><svg viewBox="0 0 24 24" width="18" height="18" style="fill:none;stroke:#44739e;stroke-width:2"><circle cx="11.3" cy="12" r="3.4"/><path d="M11 8.6V3.6M8.5 3.1L11 5.5L13.5 3.1M11 15.4V20.4M8.5 20.9L11 18.5L13.5 20.9M8 10.4L2.6 7.3M2.3 10.7L4.5 8.4L3.7 5.3M8 13.6L2.6 16.7M2.3 13.3L4.5 15.6L3.7 18.7"/><path d="M19.6 6.8V14.2M19.6 16.3V18.6" stroke-width="2.4"/></svg></div></div>
</div>
<div class="col" style="left:368px">
<div class="card" style="height:1110px;border-radius:9px 9px 0 0"><div class="t hdr" style="letter-spacing:-0.299px">ems-esp Boiler</div><div class="states">
<div class="row"><div class="badge"><svg viewBox="0 0 24 24" width="18" height="18"><path d="M15 13V5A3 3 0 0 0 9 5V13A5 5 0 1 0 15 13M12 4A1 1 0 0 1 13 5V8H11V5A1 1 0 0 1 12 4Z"/></svg></div><div class="t info" style="letter-spacing:0.034px">Actual boiler temperature</div><div class="t val" style="letter-spacing:-0.185px;margin-right:0.185px">33.2 °C</div></div>
<div class="row"><div class="badge"><svg viewBox="0 0 24 24" width="18" height="18"><path d="M20,19H4.09L14.18,4.43L15.82,5.57L11.28,12.13C12.89,12.96 14,14.62 14,16.54C14,16.7 14,16.85 13.97,17H20V19M7.91,17H11.96C12,16.85 12,16.7 12,16.54C12,15.28 11.24,14.22 10.14,13.78L7.91,17Z"/></svg></div><div class="t info" style="letter-spacing:-0.030px">Burner current power</div><div class="t val" style="letter-spacing:-0.797px;margin-right:0.797px">0%</div></div>
<div class="row"><div class="badge"><svg viewBox="0 0 24 24" width="18" height="18"><path d="M13,2.03V2.05L13,4.05C17.39,4.59 20.5,8.58 19.96,12.97C19.5,16.61 16.64,19.5 13,19.93V21.93C18.5,21.38 22.5,16.5 21.95,11C21.5,6.25 17.73,2.5 13,2.03M11,2.06C9.05,2.25 7.19,3 5.67,4.26L7.1,5.74C8.22,4.84 9.57,4.26 11,4.06V2.06M4.26,5.67C3,7.19 2.25,9.04 2.05,11H4.05C4.24,9.58 4.8,8.23 5.69,7.1L4.26,5.67M2.06,13C2.26,14.96 3.03,16.81 4.27,18.33L5.69,16.9C4.81,15.77 4.24,14.42 4.06,13H2.06M7.1,18.37L5.67,19.74C7.18,21 9.04,21.79 11,22V20C9.58,19.82 8.23,19.25 7.1,18.37M12.5,7V12.25L17,14.92L16.25,16.15L11,13V7H12.5Z"/></svg></div><div class="t info" style="letter-spacing:-0.007px">Burner stage 2 operating time</div><div class="t val" style="letter-spacing:0.062px;margin-right:-0.062px">0</div></div>
<div class="row"><div class="badge"><svg viewBox="0 0 24 24" width="18" height="18"><path d="M4,4H20A2,2 0 0,1 22,6V18A2,2 0 0,1 20,20H4A2,2 0 0,1 2,18V6A2,2 0 0,1 4,4M4,6V18H11V6H4M20,18V6H18.76C19,6.54 18.95,7.07 18.95,7.13C18.88,7.8 18.41,8.5 18.24,8.75L15.91,11.3L19.23,11.28L19.24,12.5L14.04,12.47L14,11.47C14,11.47 17.05,8.24 17.2,7.95C17.34,7.67 17.91,6 16.5,6C15.27,6.05 15.41,7.3 15.41,7.3L13.87,7.31C13.87,7.31 13.88,6.65 14.25,6H13V18H15.58L15.57,17.14L16.54,17.13C16.54,17.13 17.45,16.97 17.46,16.08C17.5,15.08 16.65,15.08 16.5,15.08C16.37,15.08 15.43,15.13 15.43,15.95H13.91C13.91,15.95 13.95,13.89 16.5,13.89C19.1,13.89 18.96,15.91 18.96,15.91C18.96,15.91 19,17.16 17.85,17.63L18.37,18H20M8.92,16H7.42V10.2L5.62,10.76V9.53L8.76,8.41H8.92V16Z"/></svg></div><div class="t info" style="letter-spacing:0.042px">Burner starts</div><div class="t val" style="letter-spacing:-0.069px;margin-right:0.069px">422,887</div></div>
<div class="row"><div class="badge"><svg viewBox="0 0 24 24" width="18" height="18"><path d="M4,4H20A2,2 0 0,1 22,6V18A2,2 0 0,1 20,20H4A2,2 0 0,1 2,18V6A2,2 0 0,1 4,4M4,6V18H11V6H4M20,18V6H18.76C19,6.54 18.95,7.07 18.95,7.13C18.88,7.8 18.41,8.5 18.24,8.75L15.91,11.3L19.23,11.28L19.24,12.5L14.04,12.47L14,11.47C14,11.47 17.05,8.24 17.2,7.95C17.34,7.67 17.91,6 16.5,6C15.27,6.05 15.41,7.3 15.41,7.3L13.87,7.31C13.87,7.31 13.88,6.65 14.25,6H13V18H15.58L15.57,17.14L16.54,17.13C16.54,17.13 17.45,16.97 17.46,16.08C17.5,15.08 16.65,15.08 16.5,15.08C16.37,15.08 15.43,15.13 15.43,15.95H13.91C13.91,15.95 13.95,13.89 16.5,13.89C19.1,13.89 18.96,15.91 18.96,15.91C18.96,15.91 19,17.16 17.85,17.63L18.37,18H20M8.92,16H7.42V10.2L5.62,10.76V9.53L8.76,8.41H8.92V16Z"/></svg></div><div class="t info" style="letter-spacing:0.026px">Burner starts heating</div><div class="t val" style="letter-spacing:-0.091px;margin-right:0.091px">49,405</div></div>
<div class="row"><div class="badge"><svg viewBox="0 0 24 24" width="18" height="18"><path d="M15 13V5A3 3 0 0 0 9 5V13A5 5 0 1 0 15 13M12 4A1 1 0 0 1 13 5V8H11V5A1 1 0 0 1 12 4Z"/></svg></div><div class="t info" style="letter-spacing:0.014px">Current flow temperature</div><div class="t val" style="letter-spacing:-0.185px;margin-right:0.185px">32.4 °C</div></div>
<div class="row"><div class="badge"><svg viewBox="0 0 24 24" width="18" height="18"><path d="M12 2C6.5 2 2 6.5 2 12S6.5 22 12 22 22 17.5 22 12 17.5 2 12 2M10 17L5 12L6.41 10.59L10 14.17L17.59 6.58L19 8L10 17Z"/></svg></div><div class="t info" style="letter-spacing:-0.109px">Dhw 3-way valve active</div><div class="t val" style="letter-spacing:-0.492px;margin-right:0.492px">On</div></div>
<div class="row"><div class="badge"><svg viewBox="0 0 24 24" width="18" height="18"><path d="M12,20A8,8 0 0,1 4,12A8,8 0 0,1 12,4A8,8 0 0,1 20,12A8,8 0 0,1 12,20M12,2A10,10 0 0,0 2,12A10,10 0 0,0 12,22A10,10 0 0,0 22,12A10,10 0 0,0 12,2Z"/></svg></div><div class="t info" style="letter-spacing:0.016px">Dhw Active</div><div class="t val" style="letter-spacing:0.240px;margin-right:-0.240px">Off</div></div>
<div class="row"><div class="badge"><svg viewBox="0 0 24 24" width="18" height="18"><path d="M13,2.03V2.05L13,4.05C17.39,4.59 20.5,8.58 19.96,12.97C19.5,16.61 16.64,19.5 13,19.93V21.93C18.5,21.38 22.5,16.5 21.95,11C21.5,6.25 17.73,2.5 13,2.03M11,2.06C9.05,2.25 7.19,3 5.67,4.26L7.1,5.74C8.22,4.84 9.57,4.26 11,4.06V2.06M4.26,5.67C3,7.19 2.25,9.04 2.05,11H4.05C4.24,9.58 4.8,8.23 5.69,7.1L4.26,5.67M2.06,13C2.26,14.96 3.03,16.81 4.27,18.33L5.69,16.9C4.81,15.77 4.24,14.42 4.06,13H2.06M7.1,18.37L5.67,19.74C7.18,21 9.04,21.79 11,22V20C9.58,19.82 8.23,19.25 7.1,18.37M12.5,7V12.25L17,14.92L16.25,16.15L11,13V7H12.5Z"/></svg></div><div class="t info" style="letter-spacing:0.051px">Dhw Active time</div><div class="t val" style="letter-spacing:-0.027px;margin-right:0.027px">2181:38:00</div></div>
<div class="row"><div class="badge"><svg viewBox="0 0 24 24" width="18" height="18"><path d="M12,20A8,8 0 0,1 4,12A8,8 0 0,1 12,4A8,8 0 0,1 20,12A8,8 0 0,1 12,20M12,2A10,10 0 0,0 2,12A10,10 0 0,0 12,22A10,10 0 0,0 22,12A10,10 0 0,0 12,2Z"/></svg></div><div class="t info" style="letter-spacing:-0.120px">Dhw Charging</div><div class="t val" style="letter-spacing:0.240px;margin-right:-0.240px">Off</div></div>
<div class="row"><div class="badge"><svg viewBox="0 0 24 24" width="18" height="18"><path d="M12,9A3,3 0 0,0 9,12A3,3 0 0,0 12,15A3,3 0 0,0 15,12A3,3 0 0,0 12,9M12,17A5,5 0 0,1 7,12A5,5 0 0,1 12,7A5,5 0 0,1 17,12A5,5 0 0,1 12,17M12,4.5C7,4.5 2.73,7.61 1,12C2.73,16.39 7,19.5 12,19.5C17,19.5 21.27,16.39 23,12C21.27,7.61 17,4.5 12,4.5Z"/></svg></div><div class="t info" style="letter-spacing:-0.101px">Dhw Charging type</div><div class="t val" style="letter-spacing:-0.153px;margin-right:0.153px">3-way valve</div></div>
<div class="row"><div class="badge"><svg viewBox="0 0 24 24" width="18" height="18"><path d="M15 13V5A3 3 0 0 0 9 5V13A5 5 0 1 0 15 13M12 4A1 1 0 0 1 13 5V8H11V5A1 1 0 0 1 12 4Z"/></svg></div><div class="t info" style="letter-spacing:-0.037px">Dhw Current intern temperature</div><div class="t val" style="letter-spacing:-0.185px;margin-right:0.185px">30.0 °C</div></div>
<div class="row"><div class="badge"><svg viewBox="0 0 24 24" width="18" height="18"><path d="M8 2C6.89 2 6 2.89 6 4V16C6 17.11 6.89 18 8 18H9V20H6V22H9C10.11 22 11 21.11 11 20V18H13V20C13 21.11 13.89 22 15 22H18V20H15V18H16C17.11 18 18 17.11 18 16V4C18 2.89 17.11 2 16 2H8M12 4.97A2 2 0 0 1 14 6.97A2 2 0 0 1 12 8.97A2 2 0 0 1 10 6.97A2 2 0 0 1 12 4.97M10 14.5H14V16H10V14.5Z"/></svg></div><div class="t info" style="letter-spacing:-0.006px">Dhw Current tap water flow</div><div class="t val" style="letter-spacing:0.215px;margin-right:-0.215px">0.0 l/min</div></div>
<div class="row"><div class="badge"><svg viewBox="0 0 24 24" width="18" height="18"><path d="M11 15H6L13 1V9H18L11 23V15Z"/></svg></div><div class="t info" style="letter-spacing:-0.237px">Dhw Energy</div><div class="t val" style="letter-spacing:-0.089px;margin-right:0.089px">16.75 kWh</div></div>
<div class="row"><div class="badge"><svg viewBox="0 0 24 24" width="18" height="18"><path d="M12,20A8,8 0 0,1 4,12A8,8 0 0,1 12,4A8,8 0 0,1 20,12A8,8 0 0,1 12,20M12,2A10,10 0 0,0 2,12A10,10 0 0,0 12,22A10,10 0 0,0 22,12A10,10 0 0,0 12,2Z"/></svg></div><div class="t info" style="letter-spacing:-0.129px">Dhw Recharging</div><div class="t val" style="letter-spacing:0.240px;margin-right:-0.240px">Off</div></div>
<div class="row"><div class="badge"><svg viewBox="0 0 24 24" width="18" height="18"><path d="M15 13V5A3 3 0 0 0 9 5V13A5 5 0 1 0 15 13M12 4A1 1 0 0 1 13 5V8H11V5A1 1 0 0 1 12 4Z"/></svg></div><div class="t info" style="letter-spacing:-0.063px">Dhw Set temperature</div><div class="t val" style="letter-spacing:-0.244px;margin-right:0.244px">62 °C</div></div>
<div class="row"><div class="badge"><svg viewBox="0 0 24 24" width="18" height="18"><path d="M4,4H20A2,2 0 0,1 22,6V18A2,2 0 0,1 20,20H4A2,2 0 0,1 2,18V6A2,2 0 0,1 4,4M4,6V18H11V6H4M20,18V6H18.76C19,6.54 18.95,7.07 18.95,7.13C18.88,7.8 18.41,8.5 18.24,8.75L15.91,11.3L19.23,11.28L19.24,12.5L14.04,12.47L14,11.47C14,11.47 17.05,8.24 17.2,7.95C17.34,7.67 17.91,6 16.5,6C15.27,6.05 15.41,7.3 15.41,7.3L13.87,7.31C13.87,7.31 13.88,6.65 14.25,6H13V18H15.58L15.57,17.14L16.54,17.13C16.54,17.13 17.45,16.97 17.46,16.08C17.5,15.08 16.65,15.08 16.5,15.08C16.37,15.08 15.43,15.13 15.43,15.95H13.91C13.91,15.95 13.95,13.89 16.5,13.89C19.1,13.89 18.96,15.91 18.96,15.91C18.96,15.91 19,17.16 17.85,17.63L18.37,18H20M8.92,16H7.42V10.2L5.62,10.76V9.53L8.76,8.41H8.92V16Z"/></svg></div><div class="t info" style="letter-spacing:-0.014px">Dhw Starts</div><div class="t val" style="letter-spacing:-0.069px;margin-right:0.069px">373,482</div></div>
<div class="row"><div class="badge"><svg viewBox="0 0 24 24" width="18" height="18"><path d="M15 13V5A3 3 0 0 0 9 5V13A5 5 0 1 0 15 13M12 4A1 1 0 0 1 13 5V8H11V5A1 1 0 0 1 12 4Z"/></svg></div><div class="t info" style="letter-spacing:-0.042px">Dhw Storage intern temperature</div><div class="t val" style="letter-spacing:-0.185px;margin-right:0.185px">30.0 °C</div></div>
<div class="row"><div class="badge"><svg viewBox="0 0 24 24" width="18" height="18"><path d="M12 2C6.5 2 2 6.5 2 12S6.5 22 12 22 22 17.5 22 12 17.5 2 12 2M10 17L5 12L6.41 10.59L10 14.17L17.59 6.58L19 8L10 17Z"/></svg></div><div class="t info" style="letter-spacing:-0.027px">Dhw Temperature ok</div><div class="t val" style="letter-spacing:-0.492px;margin-right:0.492px">On</div></div>
<div class="row"><div class="badge"><svg viewBox="0 0 24 24" width="18" height="18"><path d="M12,9A3,3 0 0,0 9,12A3,3 0 0,0 12,15A3,3 0 0,0 15,12A3,3 0 0,0 12,9M12,17A5,5 0 0,1 7,12A5,5 0 0,1 12,7A5,5 0 0,1 17,12A5,5 0 0,1 12,17M12,4.5C7,4.5 2.73,7.61 1,12C2.73,16.39 7,19.5 12,19.5C17,19.5 21.27,16.39 23,12C21.27,7.61 17,4.5 12,4.5Z"/></svg></div><div class="t info" style="letter-spacing:-0.150px">Dhw Type</div><div class="t val" style="letter-spacing:0.289px;margin-right:-0.289px">flow</div></div>
<div class="row"><div class="badge"><svg viewBox="0 0 24 24" width="18" height="18"><path d="M11 15H6L13 1V9H18L11 23V15Z"/></svg></div><div class="t info" style="letter-spacing:-0.116px">Energy heating</div><div class="t val" style="letter-spacing:-0.129px;margin-right:0.129px">0.0 kWh</div></div>
<div class="row"><div class="badge"><svg viewBox="0 0 24 24" width="18" height="18"><path d="M12,20A8,8 0 0,1 4,12A8,8 0 0,1 12,4A8,8 0 0,1 20,12A8,8 0 0,1 12,20M12,2A10,10 0 0,0 2,12A10,10 0 0,0 12,22A10,10 0 0,0 22,12A10,10 0 0,0 12,2Z"/></svg></div><div class="t info" style="letter-spacing:-0.318px">Fan</div><div class="t val" style="letter-spacing:0.240px;margin-right:-0.240px">Off</div></div>
<div class="row"><div class="badge"><svg viewBox="0 0 24 24" width="18" height="18"><path d="M12 2C6.5 2 2 6.5 2 12S6.5 22 12 22 22 17.5 22 12 17.5 2 12 2M11 19V13H8L13 5V11H16L11 19Z"/></svg></div><div class="t info" style="letter-spacing:-0.017px">Flame current</div><div class="t val" style="letter-spacing:-0.099px;margin-right:0.099px">0.0 µA</div></div>
<div class="row"><div class="badge"><svg viewBox="0 0 24 24" width="18" height="18"><path d="M12,20A8,8 0 0,1 4,12A8,8 0 0,1 12,4A8,8 0 0,1 20,12A8,8 0 0,1 12,20M12,2A10,10 0 0,0 2,12A10,10 0 0,0 12,22A10,10 0 0,0 22,12A10,10 0 0,0 12,2Z"/></svg></div><div class="t info" style="letter-spacing:-0.323px">Gas</div><div class="t val" style="letter-spacing:0.240px;margin-right:-0.240px">Off</div></div>
<div class="row"><div class="badge"><svg viewBox="0 0 24 24" width="18" height="18"><path d="M12,20A8,8 0 0,1 4,12A8,8 0 0,1 12,4A8,8 0 0,1 20,12A8,8 0 0,1 12,20M12,2A10,10 0 0,0 2,12A10,10 0 0,0 12,22A10,10 0 0,0 22,12A10,10 0 0,0 12,2Z"/></svg></div><div class="t info" style="letter-spacing:-0.108px">Gas stage 2</div><div class="t val" style="letter-spacing:0.240px;margin-right:-0.240px">Off</div></div>
<div class="row"><div class="badge"><svg viewBox="0 0 24 24" width="18" height="18"><path d="M12,20A8,8 0 0,1 4,12A8,8 0 0,1 12,4A8,8 0 0,1 20,12A8,8 0 0,1 12,20M12,2A10,10 0 0,0 2,12A10,10 0 0,0 12,22A10,10 0 0,0 22,12A10,10 0 0,0 12,2Z"/></svg></div><div class="t info" style="letter-spacing:0.021px">Heating active</div><div class="t val" style="letter-spacing:0.240px;margin-right:-0.240px">Off</div></div>
<div class="row"><div class="badge"><svg viewBox="0 0 24 24" width="18" height="18"><path d="M12,20A8,8 0 0,1 4,12A8,8 0 0,1 12,4A8,8 0 0,1 20,12A8,8 0 0,1 12,20M12,2A10,10 0 0,0 2,12A10,10 0 0,0 12,22A10,10 0 0,0 22,12A10,10 0 0,0 12,2Z"/></svg></div><div class="t info" style="letter-spacing:0.040px">Heating pump</div><div class="t val" style="letter-spacing:0.240px;margin-right:-0.240px">Off</div></div>
<div class="row"><div class="badge"><svg viewBox="0 0 24 24" width="18" height="18"><path d="M20,19H4.09L14.18,4.43L15.82,5.57L11.28,12.13C12.89,12.96 14,14.62 14,16.54C14,16.7 14,16.85 13.97,17H20V19M7.91,17H11.96C12,16.85 12,16.7 12,16.54C12,15.28 11.24,14.22 10.14,13.78L7.91,17Z"/></svg></div><div class="t info" style="letter-spacing:0.075px">Heating pump modulation</div><div class="t val" style="letter-spacing:-0.797px;margin-right:0.797px">0%</div></div>
<div class="row"><div class="badge"><svg viewBox="0 0 24 24" width="18" height="18"><path d="M12,20A8,8 0 0,1 4,12A8,8 0 0,1 12,4A8,8 0 0,1 20,12A8,8 0 0,1 12,20M12,2A10,10 0 0,0 2,12A10,10 0 0,0 12,22A10,10 0 0,0 22,12A10,10 0 0,0 12,2Z"/></svg></div><div class="t info" style="letter-spacing:0.129px">Ignition</div><div class="t val" style="letter-spacing:0.240px;margin-right:-0.240px">Off</div></div>
</div></div></div>
<div class="col" style="left:740px">
<div class="card" style="height:219px">
<svg width="364" height="217" viewBox="741 55 364 217" style="position:absolute;left:0;top:0;fill:none" shape-rendering="auto">
<path d="M789.5 98.3H1093.3M789.5 133.55H1093.3M789.5 168.8H1093.3M789.5 204.05H1093.3M789.5 239.3H1093.3M823.5 98.3V244.5M895.2 98.3V244.5M966.9 98.3V244.5M1038.6 98.3V244.5M795.5 98.3V239.3" stroke="#313131" stroke-width="1"/>
<path d="M828.60 144.3L828.60 143.0L838.00 143.0L838.00 122.5L838.60 122.5L838.60 130.0L840.00 130.0L840.00 131.0L842.00 131.0L842.00 132.0L844.50 132.0L844.50 133.0L847.00 133.0L847.00 134.0L850.00 134.0L850.00 135.0L853.00 135.0L853.00 136.0L857.00 136.0L857.00 137.0L861.00 137.0L861.00 138.0L865.00 138.0L865.00 139.0L868.00 139.0L868.00 140.0L872.00 140.0L872.00 141.0L875.00 141.0L875.00 142.0L878.00 142.0L878.00 145.0L878.40 145.0L878.40 143.0L880.50 143.0L880.50 146.5L881.00 146.5L881.00 143.0L888.00 143.0L888.00 142.6L888.45 144.4L888.90 142.6L889.35 144.4L889.80 142.6L890.25 144.4L890.70 142.6L891.15 144.4L891.60 142.6L892.00 148.5L892.60 148.5L892.60 142.6L893.05 144.4L893.50 142.6L893.95 144.4L894.40 142.6L894.85 144.4L895.30 142.6L895.75 144.4L896.20 142.6L896.65 144.4L897.10 142.6L897.55 144.4L898.00 142.6L898.45 144.4L898.90 142.6L899.35 144.4L899.80 142.6L900.25 144.4L900.70 142.6L901.15 144.4L901.60 142.6L902.05 144.4L902.50 142.6L902.95 144.4L903.40 142.6L903.85 144.4L904.30 142.6L904.75 144.4L905.20 142.6L905.65 144.4L906.10 142.6L906.55 144.4L907.00 142.6L907.45 144.4L907.90 142.6L908.00 143.0L916.00 143.0L916.00 121.0L916.60 121.0L916.60 123.0L918.70 123.0L918.70 135.5L919.30 135.5L919.30 123.0L943.50 123.0L943.50 135.5L944.20 135.5L944.20 123.0L946.50 123.0L946.50 135.5L947.20 135.5L947.20 123.0L949.60 123.0L949.60 135.5L950.30 135.5L950.30 123.0L953.50 123.0L953.50 129.0L954.30 129.0L954.30 135.0L955.00 135.0L955.00 129.5M997.00 128.6L997.45 130.4L997.90 128.6L998.35 130.4L998.80 128.6L999.25 130.4L999.70 128.6L1000.15 130.4L1000.60 128.6L1001.05 130.4L1001.50 128.6L1001.95 130.4L1002.00 129.5L1003.00 130.5L1004.00 131.5L1005.00 132.2L1005.00 132.2L1005.45 133.5L1005.90 132.2L1006.35 133.5L1006.80 132.2L1007.25 133.5L1007.70 132.2L1008.15 133.5L1008.60 132.2L1009.05 133.5L1009.50 132.2L1009.95 133.5L1010.40 132.2L1010.85 133.5L1011.00 133.0L1011.00 137.6L1011.60 137.6L1011.60 133.4L1011.60 132.2L1012.05 133.5L1012.50 132.2L1012.95 133.5L1013.40 132.2L1013.85 133.5L1014.30 132.2L1014.75 133.5L1015.20 132.2L1015.65 133.5L1016.10 132.2L1016.55 133.5L1017.00 132.2L1017.45 133.5L1017.90 132.2L1018.35 133.5L1018.80 132.2L1019.50 134.5L1020.50 132.2L1021.50 135.0L1021.50 135.0L1021.80 124.0L1022.30 135.0L1022.80 118.0L1023.30 134.0L1023.80 117.6L1024.30 133.0L1024.80 128.5L1027.60 128.5L1027.60 121.0L1028.00 121.0L1028.00 134.0L1028.50 134.0L1028.50 128.5L1033.60 128.5L1033.60 119.0L1034.10 119.0L1034.10 133.0L1034.60 133.0L1034.60 128.5L1043.00 128.5L1043.00 130.4L1049.00 130.4L1049.00 137.6L1049.60 137.6L1049.60 130.4L1061.60 130.4L1061.60 133.0L1062.00 133.0L1062.00 117.6L1062.50 117.6L1062.50 124.7L1068.00 124.7L1068.00 126.6L1070.50 126.6L1070.50 128.5L1093.20 128.5" stroke="#4a7fb0" stroke-width="1.15" stroke-linejoin="round"/>
<path d="M888.00 226.8L892.00 226.8L892.00 233.4L892.70 233.4L892.70 226.8L956.00 226.8M997.00 226.8L1093.20 226.8" stroke="#984ea3" stroke-width="1.3"/>
</svg>
<div class="bul" style="left:63px;top:20px;background:#30475f;border-color:#44739e"></div>
<div class="t leg" style="left:79.79999999999995px;letter-spacing:-0.082px">ems-esp Free memory</div>
<div class="bul" style="left:196px;top:20px;background:#5a3560;border-color:#984ea3"></div>
<div class="t leg" style="left:212.79999999999995px;letter-spacing:0.035px">ems-esp Max Alloc</div>
<div class="t yl" style="top:37.3px;letter-spacing:0.052px">180</div>
<div class="t yl" style="top:72.55000000000001px;letter-spacing:0.052px">160</div>
<div class="t yl" style="top:107.80000000000001px;letter-spacing:0.052px">140</div>
<div class="t yl" style="top:143.05px;letter-spacing:0.052px">120</div>
<div class="t yl" style="top:178.3px;letter-spacing:0.052px">100</div>
<div class="t xl" style="left:52.5px;letter-spacing:-0.212px">Sep 4</div>
<div class="t xl" style="left:124.20000000000005px;letter-spacing:-0.212px">Sep 6</div>
<div class="t xl" style="left:195.89999999999998px;letter-spacing:-0.212px">Sep 8</div>
<div class="t xl" style="left:267.5999999999999px;letter-spacing:-0.167px">Sep 10</div>
<div class="t kb">KB</div>
</div>
<div class="card"><div class="t hdr" style="letter-spacing:-0.286px">ems-esp</div><div class="states">
<div class="row"><div class="badge"><svg viewBox="0 0 24 24" width="18" height="18"><path d="M12,9A3,3 0 0,0 9,12A3,3 0 0,0 12,15A3,3 0 0,0 15,12A3,3 0 0,0 12,9M12,17A5,5 0 0,1 7,12A5,5 0 0,1 12,7A5,5 0 0,1 17,12A5,5 0 0,1 12,17M12,4.5C7,4.5 2.73,7.61 1,12C2.73,16.39 7,19.5 12,19.5C17,19.5 21.27,16.39 23,12C21.27,7.61 17,4.5 12,4.5Z"/></svg></div><div class="t info" style="letter-spacing:-0.290px">EMS Bus</div><div class="t val" style="letter-spacing:0.068px;margin-right:-0.068px">connected</div></div>
<div class="row"><div class="badge"><svg viewBox="0 0 24 24" width="18" height="18"><path d="M17,17H7V7H17M21,11V9H19V7C19,5.89 18.1,5 17,5H15V3H13V5H11V3H9V5H7C5.89,5 5,5.89 5,7V9H3V11H5V13H3V15H5V17A2,2 0 0,0 7,19H9V21H11V19H13V21H15V19H17A2,2 0 0,0 19,17V15H21V13H19V11M13,13H11V11H13M15,9H9V15H15V9Z"/></svg></div><div class="t info" style="letter-spacing:-0.088px">Free memory</div><div class="t val" style="letter-spacing:-0.167px;margin-right:0.167px">163 KB</div></div>
<div class="row"><div class="badge"><svg viewBox="0 0 24 24" width="18" height="18"><path d="M17,17H7V7H17M21,11V9H19V7C19,5.89 18.1,5 17,5H15V3H13V5H11V3H9V5H7C5.89,5 5,5.89 5,7V9H3V11H5V13H3V15H5V17A2,2 0 0,0 7,19H9V21H11V19H13V21H15V19H17A2,2 0 0,0 19,17V15H21V13H19V11M13,13H11V11H13M15,9H9V15H15V9Z"/></svg></div><div class="t info" style="letter-spacing:0.134px">Max Alloc</div><div class="t val" style="letter-spacing:-0.167px;margin-right:0.167px">107 KB</div></div>
<div class="row"><div class="badge"><svg viewBox="0 0 24 24" width="18" height="18"><path d="M4,4H20A2,2 0 0,1 22,6V18A2,2 0 0,1 20,20H4A2,2 0 0,1 2,18V6A2,2 0 0,1 4,4M4,6V18H11V6H4M20,18V6H18.76C19,6.54 18.95,7.07 18.95,7.13C18.88,7.8 18.41,8.5 18.24,8.75L15.91,11.3L19.23,11.28L19.24,12.5L14.04,12.47L14,11.47C14,11.47 17.05,8.24 17.2,7.95C17.34,7.67 17.91,6 16.5,6C15.27,6.05 15.41,7.3 15.41,7.3L13.87,7.31C13.87,7.31 13.88,6.65 14.25,6H13V18H15.58L15.57,17.14L16.54,17.13C16.54,17.13 17.45,16.97 17.46,16.08C17.5,15.08 16.65,15.08 16.5,15.08C16.37,15.08 15.43,15.13 15.43,15.95H13.91C13.91,15.95 13.95,13.89 16.5,13.89C19.1,13.89 18.96,15.91 18.96,15.91C18.96,15.91 19,17.16 17.85,17.63L18.37,18H20M8.92,16H7.42V10.2L5.62,10.76V9.53L8.76,8.41H8.92V16Z"/></svg></div><div class="t info" style="letter-spacing:-0.008px">MQTT fails</div><div class="t val" style="letter-spacing:0.062px;margin-right:-0.062px">0</div></div>
<div class="row"><div class="badge"><svg viewBox="0 0 24 24" width="18" height="18"><path d="M15,20A1,1 0 0,0 14,19H13V17H17A2,2 0 0,0 19,15V5A2,2 0 0,0 17,3H7A2,2 0 0,0 5,5V15A2,2 0 0,0 7,17H11V19H10A1,1 0 0,0 9,20H2V22H9A1,1 0 0,0 10,23H14A1,1 0 0,0 15,22H22V20H15M7,15V5H17V15H7M10.6 13.8L7.2 10.4L8.6 9L10.6 11L14.8 6.8L16.2 8.2Z"/></svg></div><div class="t info" style="letter-spacing:0.030px">NTP status</div><div class="t val" style="letter-spacing:-0.042px;margin-right:0.042px">Connected</div></div>
<div class="row"><div class="badge"><svg viewBox="0 0 24 24" width="18" height="18"><path d="M4,4H20A2,2 0 0,1 22,6V18A2,2 0 0,1 20,20H4A2,2 0 0,1 2,18V6A2,2 0 0,1 4,4M4,6V18H11V6H4M20,18V6H18.76C19,6.54 18.95,7.07 18.95,7.13C18.88,7.8 18.41,8.5 18.24,8.75L15.91,11.3L19.23,11.28L19.24,12.5L14.04,12.47L14,11.47C14,11.47 17.05,8.24 17.2,7.95C17.34,7.67 17.91,6 16.5,6C15.27,6.05 15.41,7.3 15.41,7.3L13.87,7.31C13.87,7.31 13.88,6.65 14.25,6H13V18H15.58L15.57,17.14L16.54,17.13C16.54,17.13 17.45,16.97 17.46,16.08C17.5,15.08 16.65,15.08 16.5,15.08C16.37,15.08 15.43,15.13 15.43,15.95H13.91C13.91,15.95 13.95,13.89 16.5,13.89C19.1,13.89 18.96,15.91 18.96,15.91C18.96,15.91 19,17.16 17.85,17.63L18.37,18H20M8.92,16H7.42V10.2L5.62,10.76V9.53L8.76,8.41H8.92V16Z"/></svg></div><div class="t info" style="letter-spacing:-0.033px">Rx fails</div><div class="t val" style="letter-spacing:0.062px;margin-right:-0.062px">18</div></div>
<div class="row"><div class="badge"><svg viewBox="0 0 24 24" width="18" height="18"><path d="M4,4H20A2,2 0 0,1 22,6V18A2,2 0 0,1 20,20H4A2,2 0 0,1 2,18V6A2,2 0 0,1 4,4M4,6V18H11V6H4M20,18V6H18.76C19,6.54 18.95,7.07 18.95,7.13C18.88,7.8 18.41,8.5 18.24,8.75L15.91,11.3L19.23,11.28L19.24,12.5L14.04,12.47L14,11.47C14,11.47 17.05,8.24 17.2,7.95C17.34,7.67 17.91,6 16.5,6C15.27,6.05 15.41,7.3 15.41,7.3L13.87,7.31C13.87,7.31 13.88,6.65 14.25,6H13V18H15.58L15.57,17.14L16.54,17.13C16.54,17.13 17.45,16.97 17.46,16.08C17.5,15.08 16.65,15.08 16.5,15.08C16.37,15.08 15.43,15.13 15.43,15.95H13.91C13.91,15.95 13.95,13.89 16.5,13.89C19.1,13.89 18.96,15.91 18.96,15.91C18.96,15.91 19,17.16 17.85,17.63L18.37,18H20M8.92,16H7.42V10.2L5.62,10.76V9.53L8.76,8.41H8.92V16Z"/></svg></div><div class="t info" style="letter-spacing:-0.182px">Rx received</div><div class="t val" style="letter-spacing:-0.091px;margin-right:0.091px">73,046</div></div>
<div class="row"><div class="badge"><svg viewBox="0 0 24 24" width="18" height="18"><path d="M15,20A1,1 0 0,0 14,19H13V17H17A2,2 0 0,0 19,15V5A2,2 0 0,0 17,3H7A2,2 0 0,0 5,5V15A2,2 0 0,0 7,17H11V19H10A1,1 0 0,0 9,20H2V22H9A1,1 0 0,0 10,23H14A1,1 0 0,0 15,22H22V20H15M7,15V5H17V15H7M10.6 13.8L7.2 10.4L8.6 9L10.6 11L14.8 6.8L16.2 8.2Z"/></svg></div><div class="t info" style="letter-spacing:0.054px">System status</div><div class="t val" style="letter-spacing:-0.042px;margin-right:0.042px">Connected</div></div>
<div class="row"><div class="badge"><svg viewBox="0 0 24 24" width="18" height="18"><path d="M4,4H20A2,2 0 0,1 22,6V18A2,2 0 0,1 20,20H4A2,2 0 0,1 2,18V6A2,2 0 0,1 4,4M4,6V18H11V6H4M20,18V6H18.76C19,6.54 18.95,7.07 18.95,7.13C18.88,7.8 18.41,8.5 18.24,8.75L15.91,11.3L19.23,11.28L19.24,12.5L14.04,12.47L14,11.47C14,11.47 17.05,8.24 17.2,7.95C17.34,7.67 17.91,6 16.5,6C15.27,6.05 15.41,7.3 15.41,7.3L13.87,7.31C13.87,7.31 13.88,6.65 14.25,6H13V18H15.58L15.57,17.14L16.54,17.13C16.54,17.13 17.45,16.97 17.46,16.08C17.5,15.08 16.65,15.08 16.5,15.08C16.37,15.08 15.43,15.13 15.43,15.95H13.91C13.91,15.95 13.95,13.89 16.5,13.89C19.1,13.89 18.96,15.91 18.96,15.91C18.96,15.91 19,17.16 17.85,17.63L18.37,18H20M8.92,16H7.42V10.2L5.62,10.76V9.53L8.76,8.41H8.92V16Z"/></svg></div><div class="t info" style="letter-spacing:0.039px">Tx fails</div><div class="t val" style="letter-spacing:0.062px;margin-right:-0.062px">0</div></div>
<div class="row"><div class="badge"><svg viewBox="0 0 24 24" width="18" height="18"><path d="M4,4H20A2,2 0 0,1 22,6V18A2,2 0 0,1 20,20H4A2,2 0 0,1 2,18V6A2,2 0 0,1 4,4M4,6V18H11V6H4M20,18V6H18.76C19,6.54 18.95,7.07 18.95,7.13C18.88,7.8 18.41,8.5 18.24,8.75L15.91,11.3L19.23,11.28L19.24,12.5L14.04,12.47L14,11.47C14,11.47 17.05,8.24 17.2,7.95C17.34,7.67 17.91,6 16.5,6C15.27,6.05 15.41,7.3 15.41,7.3L13.87,7.31C13.87,7.31 13.88,6.65 14.25,6H13V18H15.58L15.57,17.14L16.54,17.13C16.54,17.13 17.45,16.97 17.46,16.08C17.5,15.08 16.65,15.08 16.5,15.08C16.37,15.08 15.43,15.13 15.43,15.95H13.91C13.91,15.95 13.95,13.89 16.5,13.89C19.1,13.89 18.96,15.91 18.96,15.91C18.96,15.91 19,17.16 17.85,17.63L18.37,18H20M8.92,16H7.42V10.2L5.62,10.76V9.53L8.76,8.41H8.92V16Z"/></svg></div><div class="t info" style="letter-spacing:-0.137px">Tx reads</div><div class="t val" style="letter-spacing:-0.091px;margin-right:0.091px">17,827</div></div>
<div class="row"><div class="badge"><svg viewBox="0 0 24 24" width="18" height="18"><path d="M4,4H20A2,2 0 0,1 22,6V18A2,2 0 0,1 20,20H4A2,2 0 0,1 2,18V6A2,2 0 0,1 4,4M4,6V18H11V6H4M20,18V6H18.76C19,6.54 18.95,7.07 18.95,7.13C18.88,7.8 18.41,8.5 18.24,8.75L15.91,11.3L19.23,11.28L19.24,12.5L14.04,12.47L14,11.47C14,11.47 17.05,8.24 17.2,7.95C17.34,7.67 17.91,6 16.5,6C15.27,6.05 15.41,7.3 15.41,7.3L13.87,7.31C13.87,7.31 13.88,6.65 14.25,6H13V18H15.58L15.57,17.14L16.54,17.13C16.54,17.13 17.45,16.97 17.46,16.08C17.5,15.08 16.65,15.08 16.5,15.08C16.37,15.08 15.43,15.13 15.43,15.95H13.91C13.91,15.95 13.95,13.89 16.5,13.89C19.1,13.89 18.96,15.91 18.96,15.91C18.96,15.91 19,17.16 17.85,17.63L18.37,18H20M8.92,16H7.42V10.2L5.62,10.76V9.53L8.76,8.41H8.92V16Z"/></svg></div><div class="t info" style="letter-spacing:0.012px">Tx writes</div><div class="t val" style="letter-spacing:0.062px;margin-right:-0.062px">0</div></div>
<div class="row"><div class="badge"><svg viewBox="0 0 24 24" width="18" height="18"><path d="M12,9A3,3 0 0,0 9,12A3,3 0 0,0 12,15A3,3 0 0,0 15,12A3,3 0 0,0 12,9M12,17A5,5 0 0,1 7,12A5,5 0 0,1 12,7A5,5 0 0,1 17,12A5,5 0 0,1 12,17M12,4.5C7,4.5 2.73,7.61 1,12C2.73,16.39 7,19.5 12,19.5C17,19.5 21.27,16.39 23,12C21.27,7.61 17,4.5 12,4.5Z"/></svg></div><div class="t info" style="letter-spacing:0.034px">Uptime</div><div class="t val" style="letter-spacing:0.028px;margin-right:-0.028px">000+21:11:01.434</div></div>
<div class="row"><div class="badge"><svg viewBox="0 0 24 24" width="18" height="18"><path d="M13,2.03V2.05L13,4.05C17.39,4.59 20.5,8.58 19.96,12.97C19.5,16.61 16.64,19.5 13,19.93V21.93C18.5,21.38 22.5,16.5 21.95,11C21.5,6.25 17.73,2.5 13,2.03M11,2.06C9.05,2.25 7.19,3 5.67,4.26L7.1,5.74C8.22,4.84 9.57,4.26 11,4.06V2.06M4.26,5.67C3,7.19 2.25,9.04 2.05,11H4.05C4.24,9.58 4.8,8.23 5.69,7.1L4.26,5.67M2.06,13C2.26,14.96 3.03,16.81 4.27,18.33L5.69,16.9C4.81,15.77 4.24,14.42 4.06,13H2.06M7.1,18.37L5.67,19.74C7.18,21 9.04,21.79 11,22V20C9.58,19.82 8.23,19.25 7.1,18.37M12.5,7V12.25L17,14.92L16.25,16.15L11,13V7H12.5Z"/></svg></div><div class="t info" style="letter-spacing:0.025px">Uptime (sec)</div><div class="t val" style="letter-spacing:0.051px;margin-right:-0.051px">21:11:01</div></div>
<div class="row"><div class="badge"><svg viewBox="0 0 24 24" width="18" height="18"><path d="M12,9A3,3 0 0,0 9,12A3,3 0 0,0 12,15A3,3 0 0,0 15,12A3,3 0 0,0 12,9M12,17A5,5 0 0,1 7,12A5,5 0 0,1 12,7A5,5 0 0,1 17,12A5,5 0 0,1 12,17M12,4.5C7,4.5 2.73,7.61 1,12C2.73,16.39 7,19.5 12,19.5C17,19.5 21.27,16.39 23,12C21.27,7.61 17,4.5 12,4.5Z"/></svg></div><div class="t info" style="letter-spacing:0.047px">Version</div><div class="t val" style="letter-spacing:-0.077px;margin-right:0.077px">3.7.0-dev.35</div></div>
</div></div>
<div class="card"><div class="t hdr" style="letter-spacing:-0.238px">ems-esp Temperature</div><div class="states">
<div class="row"><div class="badge"><svg viewBox="0 0 24 24" width="18" height="18"><path d="M15 13V5A3 3 0 0 0 9 5V13A5 5 0 1 0 15 13M12 4A1 1 0 0 1 13 5V8H11V5A1 1 0 0 1 12 4Z"/></svg></div><div class="t info">Zolder</div><div class="t val" style="letter-spacing:-0.185px;margin-right:0.185px">22.3 °C</div></div>
</div></div>
</div>
<div style="position:absolute;left:0;top:1147px;width:1111px;height:4px;background:#3c3c3c"></div>
</body></html>
